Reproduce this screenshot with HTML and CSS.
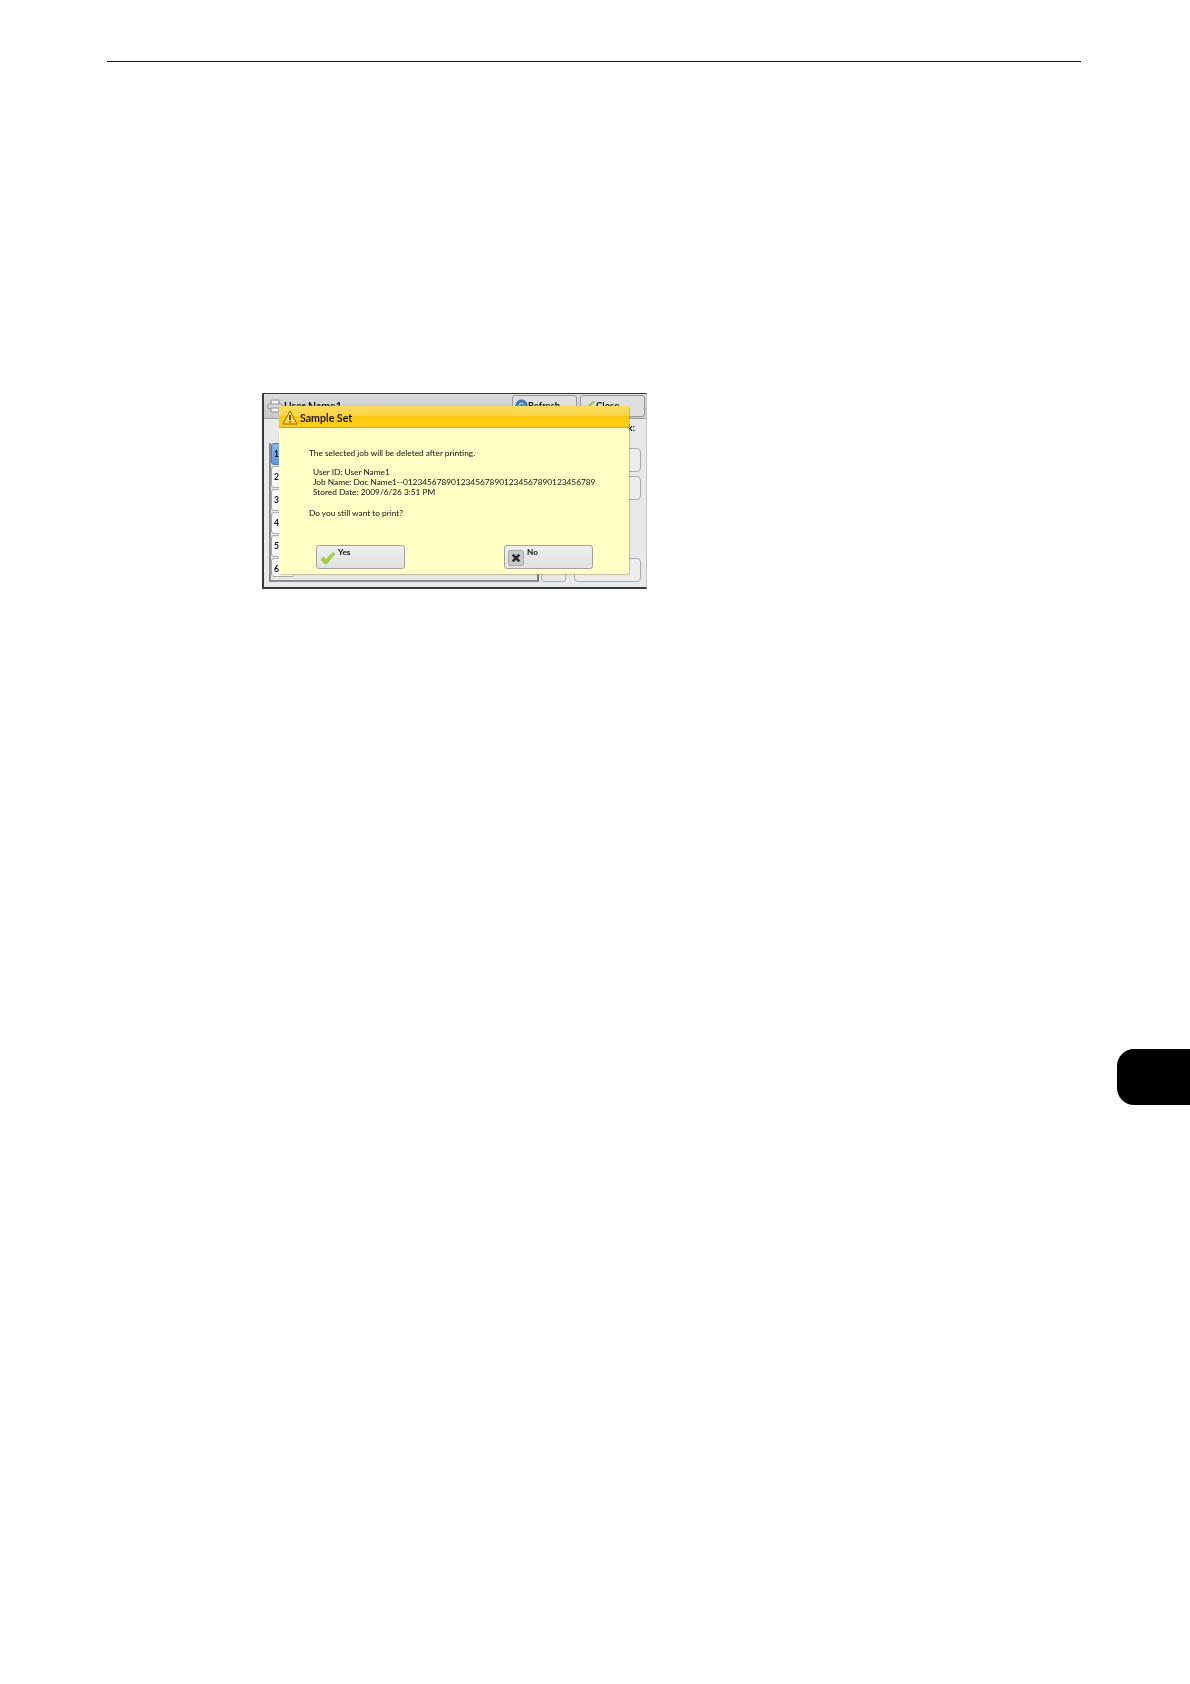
FILE: index.html
```html
<!DOCTYPE html>
<html lang="en">
<head>
<meta charset="utf-8">
<title>Sample Set</title>
<link rel="stylesheet" href="styles.css">
</head>
<body>
<header class="page-head"></header>
<div class="layout">
  <main class="content">
    <figure class="screen">
      <div class="topbar">
        <svg class="printer" viewBox="0 0 16 14" aria-hidden="true">
          <path d="M4 5V1h8v4" fill="#f2f2f2" stroke="#8b8f94"/>
          <rect x="1" y="5" width="14" height="5" rx="1.5" fill="#d6d8da" stroke="#8b8f94"/>
          <path d="M4 9h8v4H4z" fill="#f5f5f5" stroke="#8b8f94"/>
        </svg>
        <span class="user">User Name1</span>
        <span class="top-btn">
          <svg class="top-ico" viewBox="0 0 14 14" aria-hidden="true"><circle cx="7" cy="7" r="6" fill="#3f7fc4" stroke="#2b5c96"/><path d="M4.5 7a2.5 2.5 0 0 1 4.6-1.3M9.5 7a2.5 2.5 0 0 1-4.6 1.3" fill="none" stroke="#fff"/></svg>
          Refresh
        </span>
        <span class="top-btn">
          <svg class="top-ico" viewBox="0 0 14 14" aria-hidden="true"><path d="M1 8l3 4 9-9-2-1-7 6-2-1z" fill="#9ccb3a"/></svg>
          Close
        </span>
      </div>
      <div class="panel">
        <div class="list">
          <div class="row row-on">1</div>
          <div class="row">2</div>
          <div class="row">3</div>
          <div class="row">4</div>
          <div class="row">5</div>
          <div class="row">6</div>
        </div>
        <div class="scroll"></div>
        <div class="actions">
          <div class="label">k:</div>
          <div class="act"></div>
          <div class="act"></div>
          <div class="act act-end"></div>
        </div>
      </div>
      <section class="dialog">
        <h2 class="dlg-title">
          <svg class="warn" viewBox="0 0 16 15" aria-hidden="true">
            <path d="M8 1l7 13H1z" fill="#ffd84a" stroke="#8a6a10" stroke-linejoin="round"/>
            <path d="M8 5v5M8 11.2v1.3" stroke="#222" stroke-width="1.4"/>
          </svg>
          Sample Set
        </h2>
        <div class="dlg-body">
          <p class="msg">The selected job will be deleted after printing.</p>
          <div class="info">
            <div>User ID: User Name1</div>
            <div>Job Name: Doc Name1--0123456789012345678901234567890123456789</div>
            <div>Stored Date: 2009/6/26 3:51 PM</div>
          </div>
          <p class="msg">Do you still want to print?</p>
          <div class="btns">
            <div class="btn">
              <svg class="ico-yes" viewBox="0 0 18 15" aria-hidden="true"><path d="M1 8.500l3.500-1.800 2 2.500L14.500 1.500l2.500 1L7.500 14H5z" fill="#a2d232" stroke="#86ad3e" stroke-width=".5"/></svg>
              <span>Yes</span>
            </div>
            <div class="btn">
              <span class="ico-no"><svg viewBox="0 0 12 12" aria-hidden="true"><path d="M2 2l8 8M10 2l-8 8" stroke="#2c2c2c" stroke-width="3.200"/></svg></span>
              <span>No</span>
            </div>
          </div>
        </div>
      </section>
    </figure>
  </main>
  <aside class="tab"></aside>
</div>
</body>
</html>
```
FILE: styles.css
```css
* { box-sizing: border-box; }
html, body { margin: 0; padding: 0; }
body {
  width: 1190px;
  height: 1684px;
  overflow: hidden;
  background: #fff;
  font-family: "Lato", "Open Sans", "Liberation Sans", sans-serif;
  color: #111;
}
.page-head {
  height: 62px;
  margin: 0 109px 0 107px;
  border-bottom: 1px solid #111;
}
.layout { display: flex; align-items: flex-start; }
.content { padding: 331px 0 0 262px; width: 1117px; }
.tab {
  width: 73px;
  height: 56px;
  margin-top: 987px;
  background: #000;
  border-radius: 17px 0 0 17px;
}
.screen {
  position: relative;
  margin: 0;
  width: 385px;
  height: 196px;
  background: #e9e9e9;
  border: 1px solid #8f9194;
  border-color: #333a44 #c4c6c8 #333a44 #333a44;
  border-width: 1px 1px 2px 2px;
  display: flex;
  flex-direction: column;
  filter: blur(.45px);
}
.topbar {
  height: 25px;
  flex: none;
  display: flex;
  align-items: flex-start;
  background: linear-gradient(#dadbdc, #c8c9cb);
  border-bottom: 1px solid #9a9c9e;
  padding: 1px 1px 0 3px;
  overflow: hidden;
}
.printer { width: 16px; height: 14px; margin-top: 4px; flex: none; }
.user { font-size: 10.5px; font-weight: 700; line-height: 13px; margin: 5px auto 0 1px; white-space: nowrap; }
.top-btn {
  width: 65px;
  height: 22px;
  margin-left: 3px;
  padding: 3px 0 0 2px;
  display: flex;
  gap: 0;
  font-size: 9.5px;
  font-weight: 700;
  line-height: 13px;
  border: 1px solid #97999c;
  border-radius: 3px;
  background: #dfdfdf;
}
.top-ico { width: 13px; height: 13px; flex: none; }
.panel {
  flex: 1;
  display: flex;
  align-items: flex-end;
  padding: 0 4px 5px 5px;
}
.list {
  width: 270px;
  height: 139px;
  padding-bottom: 6px;
  border-bottom: 2px solid #8a8c8e;
  border-right: 2px solid #77797b;
  border-left: 2px solid #8a8c8e;
  display: flex;
  flex-direction: column;
  gap: 1px;
  background: #e6e6e6;
}
.row {
  flex: 0 0 22px;
  padding: 3px 0 0 2px;
  font-size: 8.5px;
  font-weight: 700;
  line-height: 14px;
  border: 1px solid #a9abad;
  border-radius: 3px;
  background: #fafafa;
  width: 24px;
}
.row:last-child { flex-basis: 16px; }
.row-on { background: linear-gradient(#8db6ee, #5f95e2); border-color: #4d7ab5; }
.scroll {
  width: 25px;
  height: 12px;
  margin: 0 8px 0 2px;
  border: 1px solid #a9abad;
  border-radius: 0 0 3px 3px;
}
.actions {
  width: 67px;
  height: 160px;
  display: flex;
  flex-direction: column;
  gap: 4px;
  position: relative;
}
.label { height: 22px; font-size: 9px; font-weight: 700; text-align: right; padding-right: 6px; }
.act {
  height: 24px;
  border: 1px solid #a9abad;
  border-radius: 4px;
  background: #ededed;
}
.act-end { margin-top: auto; }
.dialog {
  position: absolute;
  left: 15px;
  top: 12px;
  width: 350px;
  height: 168px;
  background: #ffffc6;
  border-radius: 2px;
  box-shadow: 0 0 1px #c9b96a, 1px 1px 1px rgba(140, 130, 70, .4);
  display: flex;
  flex-direction: column;
}
.dlg-title {
  margin: 0;
  height: 22px;
  flex: none;
  display: flex;
  align-items: center;
  gap: 2px;
  padding: 1px 0 0 3px;
  font-size: 10.6px;
  font-weight: 700;
  color: #1a1a1a;
  background: linear-gradient(#f9dc62 0, #fbd644 42%, #fbc70f 48%, #fdd01a 92%, #b99a22 100%);
}
.warn { width: 16px; height: 15px; flex: none; }
.dlg-body { flex: 1; padding: 20px 0 0 30px; display: flex; flex-direction: column; }
.msg { margin: 0; font-size: 8.3px; line-height: 10px; }
.info { margin: 9px 0 11px 4px; font-size: 8.35px; line-height: 10px; letter-spacing: -.03px; white-space: nowrap; }
.btns { display: flex; gap: 99px; margin: 27px 0 0 7px; }
.btn {
  width: 89px;
  height: 24px;
  flex: none;
  display: flex;
  align-items: flex-start;
  gap: 2px;
  padding: 1px 0 0 3px;
  font-size: 8.2px;
  font-weight: 700;
  line-height: 11px;
  border: 1px solid #a3a29c;
  border-radius: 3px;
  background: linear-gradient(#eeeeec, #e2e2e2);
}
.ico-yes { width: 16px; height: 14px; margin-top: 4px; flex: none; }
.ico-no {
  width: 16px;
  height: 16px;
  margin: 3px 1px 0 0;
  padding: 2px;
  flex: none;
  display: block;
  background: #c9c9c9;
  border-radius: 2px;
  border: 1px solid #aaa;
}
.ico-no svg { display: block; width: 100%; height: 100%; }
```
